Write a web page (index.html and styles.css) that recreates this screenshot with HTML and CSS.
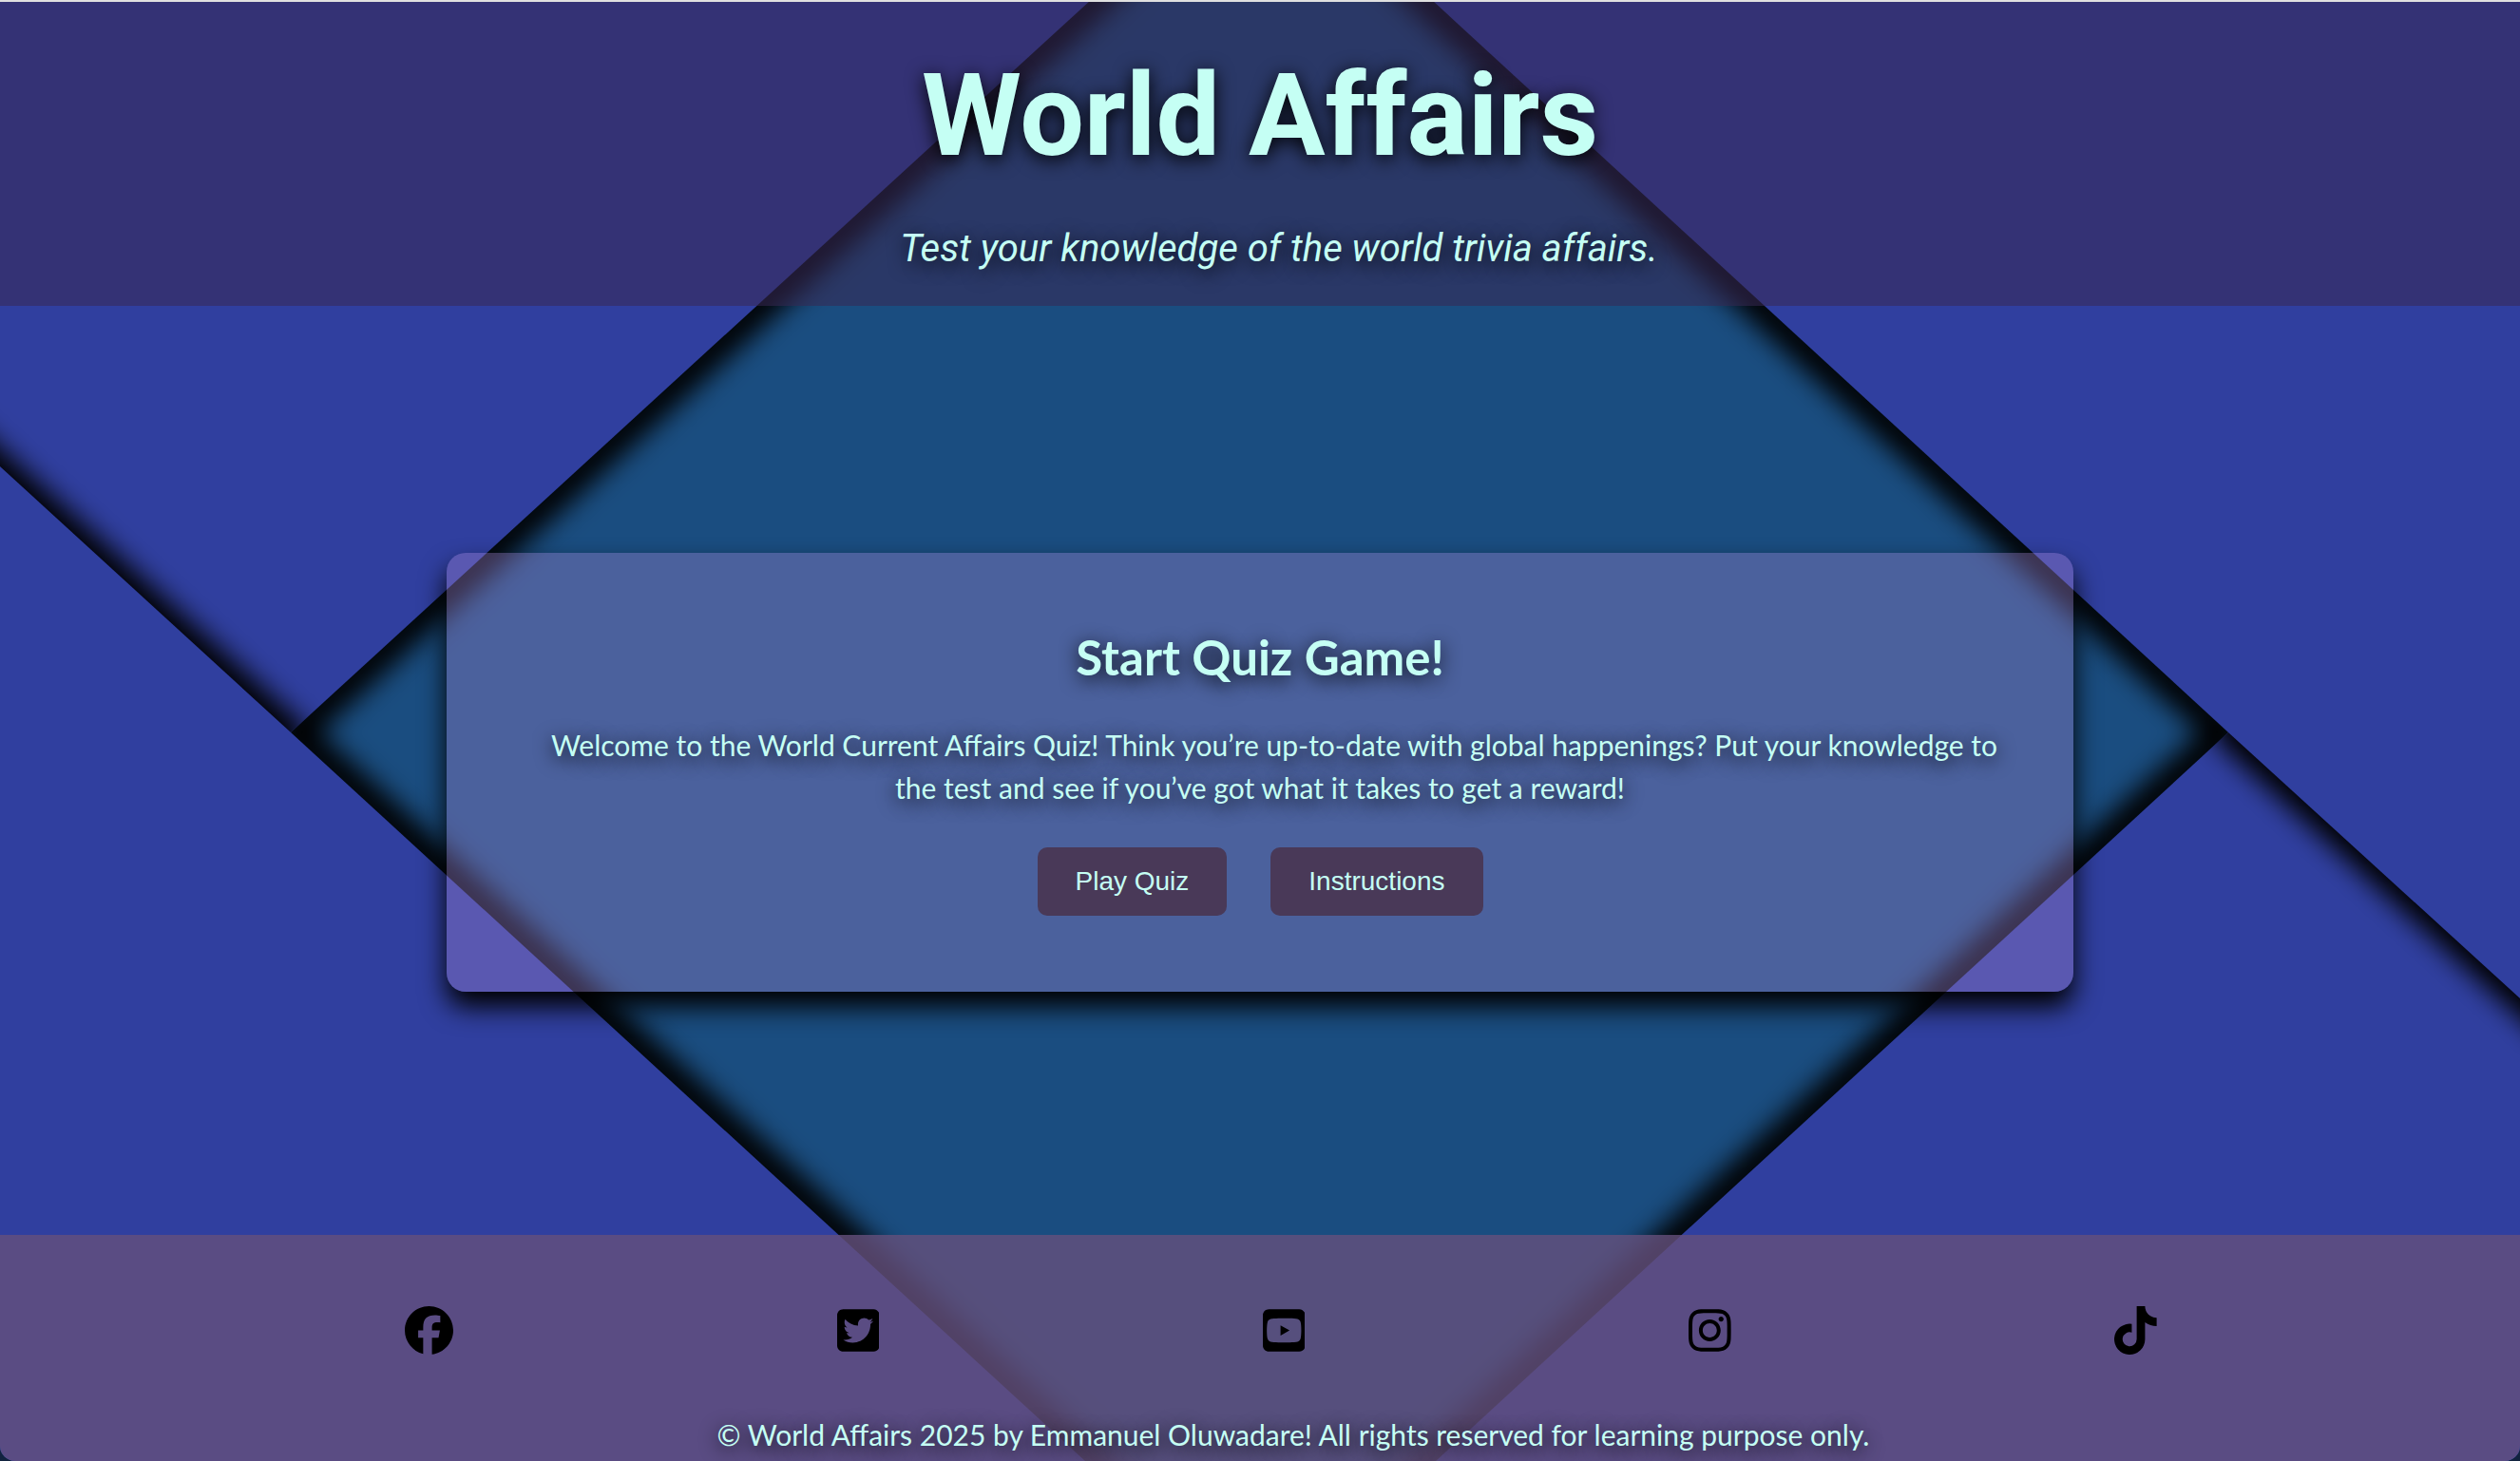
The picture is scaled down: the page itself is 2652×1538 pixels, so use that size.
FILE: index.html
```html
<!DOCTYPE html>
<html lang="en">
<head>
  <meta charset="utf-8">
  <meta name="viewport" content="width=device-width, initial-scale=1">
  <title>World Affairs</title>
  <link rel="stylesheet" href="styles.css">
</head>
<body>
  <div class="page">
    <svg class="backdrop" viewBox="0 0 2652 1538" preserveAspectRatio="none" aria-hidden="true">
      <defs>
        <filter id="soft" filterUnits="userSpaceOnUse" x="-300" y="-300" width="3252" height="2138">
          <feGaussianBlur stdDeviation="14"/>
        </filter>
        <clipPath id="upper-left"><path d="M0 0H1148L306 771 0 771z"/></clipPath>
        <clipPath id="lower-right"><path d="M2652 771H2345L1511 1538H2652z"/></clipPath>
      </defs>
      <rect class="diamond" width="2652" height="1538"/>
      <!-- shadow falling inside the diamond -->
      <path class="shadow shadow-deep" filter="url(#soft)" d="M1327-163L306 771 1327 1707 2345 771z"/>
      <!-- upper left and lower right panels -->
      <path class="panel" d="M0 0H1148L306 771 0 771z"/>
      <path class="panel" d="M2652 771H2345L1511 1538H2652z"/>
      <!-- shadows of the two front panels -->
      <g clip-path="url(#upper-left)"><path class="shadow" filter="url(#soft)" d="M-306 212L306 771 0 1060-306 1060z"/></g>
      <g clip-path="url(#lower-right)"><path class="shadow" filter="url(#soft)" d="M2345 771L2958 1330V500H2345z"/></g>
      <path class="panel" d="M0 491L306 771 1142 1538H0z"/>
      <path class="panel" d="M1507 0L2345 771 2652 1051V0z"/>
    </svg>

    <header class="header">
      <h1 class="title">World Affairs</h1>
      <p class="tagline">Test your knowledge of the world trivia affairs.</p>
    </header>

    <main class="main">
      <section class="card">
        <h2 class="card-title">Start Quiz Game!</h2>
        <p class="card-text">Welcome to the World Current Affairs Quiz! Think you’re up-to-date with global happenings? Put your knowledge to the test and see if you’ve got what it takes to get a reward!</p>
        <div class="actions">
          <button class="button" type="button">Play Quiz</button>
          <button class="button" type="button">Instructions</button>
        </div>
      </section>
    </main>

    <footer class="footer">
      <nav class="social" aria-label="Social media">
        <a href="#" aria-label="Facebook"><svg class="icon" viewBox="0 0 512 512"><path d="M512 256C512 114.6 397.4 0 256 0S0 114.6 0 256C0 376 82.7 476.8 194.2 504.5V334.2H141.4V256h52.8V222.3c0-87.1 39.4-127.5 125-127.5c16.2 0 44.2 3.2 55.7 6.4V172c-6-.6-16.5-1-29.6-1c-42 0-58.2 15.9-58.2 57.2V256h83.6l-14.4 78.2H287V510.1C413.8 494.8 512 386.9 512 256h0z"/></svg></a>
        <a href="#" aria-label="Twitter"><svg class="icon" viewBox="0 0 448 512"><path d="M64 32C28.7 32 0 60.7 0 96V416c0 35.3 28.7 64 64 64H384c35.3 0 64-28.7 64-64V96c0-35.3-28.7-64-64-64H64zM351.3 199.3v0c0 86.7-66 186.6-186.6 186.6c-37.2 0-71.7-10.8-100.7-29.4c5.3 .6 10.4 .8 15.8 .8c30.7 0 58.9-10.4 81.4-28c-28.8-.6-53-19.5-61.3-45.5c10.1 1.5 19.2 1.5 29.6-1.2c-30-6.1-52.5-32.5-52.5-64.4v-.8c8.7 4.9 18.9 7.9 29.6 8.3c-9-6-16.4-14.1-21.5-23.6s-7.8-20.2-7.7-31c0-12.2 3.2-23.4 8.9-33.1c32.3 39.8 80.8 65.8 135.2 68.6c-9.3-44.5 24-80.6 64-80.6c18.9 0 35.9 7.9 47.9 20.7c14.8-2.8 29-8.3 41.6-15.8c-4.9 15.2-15.2 28-28.8 36.1c13.2-1.4 26-5.1 37.8-10.2c-8.9 13.1-20.1 24.7-32.9 34c.2 2.8 .2 5.7 .2 8.5z"/></svg></a>
        <a href="#" aria-label="YouTube"><svg class="icon" viewBox="0 0 448 512"><path d="M282 256.2l-95.2-54.1V310.3L282 256.2zM384 32H64C28.7 32 0 60.7 0 96V416c0 35.3 28.7 64 64 64H384c35.3 0 64-28.7 64-64V96c0-35.3-28.7-64-64-64zm14.4 136.1c7.6 28.6 7.6 88.2 7.6 88.2s0 59.6-7.6 88.1c-4.2 15.8-16.5 27.7-32.2 31.9C337.9 384 224 384 224 384s-113.9 0-142.2-7.6c-15.7-4.2-28-16.1-32.2-31.9C42 315.9 42 256.3 42 256.3s0-59.7 7.6-88.2c4.2-15.8 16.5-28.2 32.2-32.4C110.1 128 224 128 224 128s113.9 0 142.2 7.7c15.7 4.2 28 16.6 32.2 32.4z"/></svg></a>
        <a href="#" aria-label="Instagram"><svg class="icon" viewBox="0 0 448 512"><path d="M224.1 141c-63.6 0-114.9 51.3-114.9 114.9s51.3 114.9 114.9 114.9S339 319.5 339 255.9 287.7 141 224.1 141zm0 189.6c-41.1 0-74.7-33.5-74.7-74.7s33.5-74.7 74.7-74.7 74.7 33.5 74.7 74.7-33.6 74.7-74.7 74.7zm146.4-194.3c0 14.9-12 26.8-26.8 26.8-14.9 0-26.8-12-26.8-26.8s12-26.8 26.8-26.8 26.8 12 26.8 26.8zm76.1 27.2c-1.7-35.9-9.9-67.7-36.2-93.9-26.2-26.2-58-34.4-93.9-36.2-37-2.1-147.9-2.1-184.9 0-35.8 1.7-67.6 9.9-93.9 36.1s-34.4 58-36.2 93.9c-2.1 37-2.1 147.9 0 184.9 1.7 35.9 9.9 67.7 36.2 93.9s58 34.4 93.9 36.2c37 2.1 147.9 2.1 184.9 0 35.9-1.7 67.7-9.9 93.9-36.2 26.2-26.2 34.4-58 36.2-93.9 2.1-37 2.1-147.8 0-184.8zM398.8 388c-7.8 19.6-22.9 34.7-42.6 42.6-29.5 11.7-99.5 9-132.1 9s-102.7 2.6-132.1-9c-19.6-7.8-34.7-22.9-42.6-42.6-11.7-29.5-9-99.5-9-132.1s-2.6-102.7 9-132.1c7.8-19.6 22.9-34.7 42.6-42.6 29.5-11.7 99.5-9 132.1-9s102.7-2.6 132.1 9c19.6 7.8 34.7 22.9 42.6 42.6 11.7 29.5 9 99.5 9 132.1s2.7 102.7-9 132.1z"/></svg></a>
        <a href="#" aria-label="TikTok"><svg class="icon" viewBox="0 0 448 512"><path d="M448 209.9a210.1 210.1 0 0 1-122.8-39.3V349.4A162.6 162.6 0 1 1 185 188.3V278.2a74.6 74.6 0 1 0 52.2 71.2V0l88 0a121.2 121.2 0 0 0 1.9 22.2h0A122.2 122.2 0 0 0 381 102.4a121.4 121.4 0 0 0 67 20.1z"/></svg></a>
      </nav>
      <p class="copyright">© World Affairs 2025 by Emmanuel Oluwadare! All rights reserved for learning purpose only.</p>
    </footer>
  </div>
</body>
</html>
```

FILE: styles.css
```css
* {
  box-sizing: border-box;
  margin: 0;
}

body {
  background: #12233f;
  color: #c5fff4;
  font-family: Lato, sans-serif;
  font-size: 30px;
  line-height: 45px;
}

.page {
  position: relative;
  display: flex;
  flex-direction: column;
  min-height: 100vh;
  overflow: hidden;
  border-top: 2px solid #e0e0e0;
  border-radius: 0 0 16px 16px;
  text-align: center;
  text-shadow: 0 4px 20px #000;
}

/* Folded-paper backdrop, stretched behind the whole page */
.backdrop {
  position: absolute;
  inset: -2px 0 0;
  z-index: -1;
  width: 100%;
  height: calc(100% + 2px);
}

.diamond {
  fill: #1a4d80;
}

.panel {
  fill: #303f9f;
}

.shadow {
  fill: #000;
  stroke: #000;
  stroke-width: 30px;
}

.shadow-deep {
  fill: none;
  stroke-width: 40px;
}

.header {
  display: flex;
  flex-direction: column;
  gap: 40px;
  padding: 50px 20px 30px;
  background: rgba(57, 40, 82, 0.55);
  font-family: Roboto, sans-serif;
}

.title {
  font-size: 120px;
  font-weight: 700;
  line-height: 140px;
}

.tagline {
  font-size: 40px;
  font-style: italic;
  line-height: 60px;
  text-indent: 40px;
}

.main {
  display: flex;
  flex: 1;
  align-items: center;
  justify-content: center;
  padding: 44px 40px 40px;
}

.card {
  width: 100%;
  max-width: 1712px;
  padding: 72px 75px 80px;
  border-radius: 20px;
  background: rgba(168, 134, 211, 0.35);
  box-shadow: 0 16px 28px #000;
}

.card-title {
  margin-bottom: 32px;
  font-size: 51px;
  font-weight: 700;
  line-height: 76px;
}

.card-text {
  margin-bottom: 40px;
  text-indent: 30px;
}

.actions {
  display: flex;
  flex-wrap: wrap;
  justify-content: center;
  gap: 46px;
}

.button {
  height: 72px;
  padding: 0 40px;
  border: 0;
  border-radius: 10px;
  background: #493958;
  color: inherit;
  font-family: "Liberation Sans", Arial, sans-serif;
  font-size: 28px;
  cursor: pointer;
}

.footer {
  padding: 75px 0 5px;
  background: rgba(101, 80, 124, 0.8);
}

.social {
  display: flex;
  justify-content: space-around;
  margin-bottom: 62px;
  padding: 0 180px 0 224px;
}

.social a {
  display: flex;
  color: #000;
}

.icon {
  height: 51px;
  fill: currentColor;
}

.copyright {
  padding-left: 70px;
}
```
